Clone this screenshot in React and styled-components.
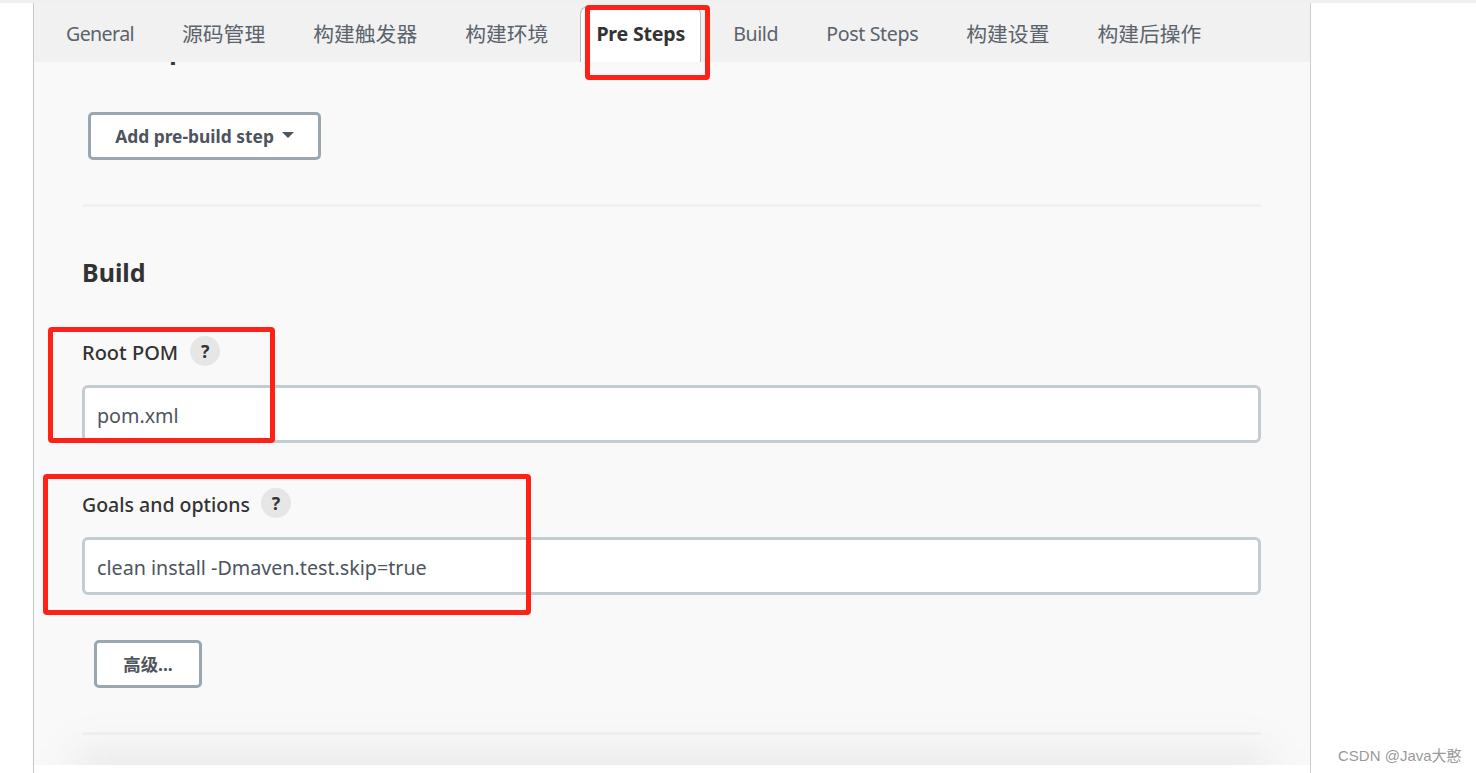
import React from "react";
import styled, { createGlobalStyle } from "styled-components";

const Global = createGlobalStyle`
  html, body { margin: 0; padding: 0; background: #fff; }
  body { font-family: "Noto Sans", "Noto Sans CJK SC", sans-serif; }
  * { box-sizing: border-box; }
`;
const Page = styled.div`
  position: relative;
  width: 1476px;
  height: 773px;
  overflow: hidden;
  background: #fff;
`;
const TopStrip = styled.div`
  height: 3px;
  background: #f0f0f0;
`;
const Panel = styled.div`
  width: 1278px;
  height: 770px;
  margin-left: 33px;
  background: #f9f9f9;
  border-left: 1px solid #c3c9cc;
  border-right: 1px solid #c3ced4;
  display: flex;
  flex-direction: column;
  overflow: hidden;
`;
const TabBar = styled.nav`
  position: relative;
  z-index: 2;
  height: 59px;
  flex: none;
  display: flex;
  gap: 16px;
  padding: 3px 0 0 16px;
  background: #f1f1f1;
`;
const Tab = styled.div`
  display: flex;
  align-items: center;
  padding: 0 ${(p) => (p.$active ? 15 : 16)}px 2px;
  font-size: ${(p) => (p.$cjk ? "20.8px" : "19.6px")};
  font-weight: ${(p) => (p.$active ? 700 : 400)};
  letter-spacing: ${(p) => p.$track}px;
  white-space: nowrap;
  color: ${(p) => (p.$active ? "#333" : "#5b636c")};
  ${(p) =>
    p.$active &&
    `background:#fff;border:1px solid #b4bcc2;border-bottom:0;border-radius:8px 8px 0 0;`}
`;
const Content = styled.main`
  flex: 1;
  padding: 0 49px 0 48px;
  min-height: 0;
`;
const SectionTitle = styled.h2`
  margin: ${(p) => p.$top}px 0 0;
  font-size: 25px;
  line-height: 36px;
  font-weight: 700;
  color: #333;
`;
const OutlineButton = styled.button`
  display: flex;
  align-items: center;
  justify-content: center;
  gap: 8px;
  width: ${(p) => p.$width}px;
  height: 48px;
  margin: ${(p) => p.$top}px 0 0 ${(p) => p.$left}px;
  padding: 0 0 1px;
  background: #fff;
  border: 3px solid #9aa7b0;
  border-radius: 5px;
  font: 700 17.4px "Noto Sans", "Noto Sans CJK SC", sans-serif;
  color: #4d545d;
`;
const Caret = styled.span`
  width: 0;
  height: 0;
  margin-top: -1px;
  border-left: 6px solid transparent;
  border-right: 6px solid transparent;
  border-top: 6px solid #4d545d;
`;
const Divider = styled.hr`
  height: 3px;
  margin: 44px 0 0;
  border: 0;
  background: #f1f1f1;
`;
const Field = styled.div`
  margin-top: ${(p) => p.$top}px;
`;
const LabelRow = styled.div`
  display: flex;
  align-items: center;
  gap: ${(p) => p.$gap}px;
  height: 30px;
`;
const Label = styled.label`
  font-size: ${(p) => p.$size}px;
  font-weight: 500;
  color: #333;
`;
const Help = styled.span`
  display: flex;
  align-items: center;
  justify-content: center;
  width: 30px;
  height: 30px;
  margin-top: -2px;
  border-radius: 50%;
  background: #e6e6e6;
  font-size: 17.6px;
  font-weight: 700;
  color: #333;
`;
const TextInput = styled.input`
  display: block;
  width: 100%;
  height: 58px;
  margin-top: 18px;
  padding: 2px 12px 0;
  background: #fff;
  border: 3px solid #c3ccd1;
  border-radius: 6px;
  outline: 0;
  font: 400 19.7px "Noto Sans", sans-serif;
  color: #4d545d;
`;
const Footer = styled.footer`
  position: relative;
  flex: none;
  height: 8px;
  background: #fff;
  &::before {
    content: "";
    position: absolute;
    left: 40px;
    right: 40px;
    top: -16px;
    height: 56px;
    background: rgba(0, 0, 0, 0.06);
    filter: blur(20px);
    clip-path: inset(-80px -80px 40px -80px);
  }
`;
const Mark = styled.div`
  position: absolute;
  border: 5px solid #ff2116;
  border-radius: 4px;
  left: ${(p) => p.$x}px;
  top: ${(p) => p.$y}px;
  width: ${(p) => p.$w}px;
  height: ${(p) => p.$h}px;
  z-index: 3;
`;
const Watermark = styled.div`
  position: absolute;
  left: 1338px;
  top: 744px;
  font: 15px "Liberation Sans", "Noto Sans CJK SC", sans-serif;
  color: #9a9a9a;
  white-space: nowrap;
`;

const tabs = [
  { label: "General", track: -0.6 },
  { label: "源码管理", cjk: true, track: 0 },
  { label: "构建触发器", cjk: true, track: 0 },
  { label: "构建环境", cjk: true, track: 0 },
  { label: "Pre Steps", active: true, track: -0.2 },
  { label: "Build", track: -0.4 },
  { label: "Post Steps", track: -0.35 },
  { label: "构建设置", cjk: true, track: 0 },
  { label: "构建后操作", cjk: true, track: 0 },
];

export default function App() {
  return (
    <Page>
      <Global />
      <TopStrip />
      <Panel>
        <TabBar>
          {tabs.map((t) => (
            <Tab key={t.label} $cjk={t.cjk} $active={t.active} $track={t.track}>{t.label}</Tab>
          ))}
        </TabBar>
        <Content>
          <SectionTitle $top={-31}>Pre Steps</SectionTitle>
          <OutlineButton $width={233} $top={45} $left={6}>
            Add pre-build step <Caret />
          </OutlineButton>
          <Divider />
          <SectionTitle $top={47}>Build</SectionTitle>
          <Field $top={47}>
            <LabelRow $gap={12}><Label $size={20}>Root POM</Label><Help>?</Help></LabelRow>
            <TextInput readOnly value="pom.xml" />
          </Field>
          <Field $top={46}>
            <LabelRow $gap={11}><Label $size={19.5}>Goals and options</Label><Help>?</Help></LabelRow>
            <TextInput readOnly value="clean install -Dmaven.test.skip=true" />
          </Field>
          <OutlineButton $width={108} $top={45} $left={12}>高级...</OutlineButton>
          <Divider />
        </Content>
        <Footer />
      </Panel>
      <Mark $x={585} $y={5} $w={125} $h={75} />
      <Mark $x={48} $y={327} $w={227} $h={116} />
      <Mark $x={43} $y={474} $w={488} $h={141} />
      <Watermark>CSDN @Java大憨</Watermark>
    </Page>
  );
}
